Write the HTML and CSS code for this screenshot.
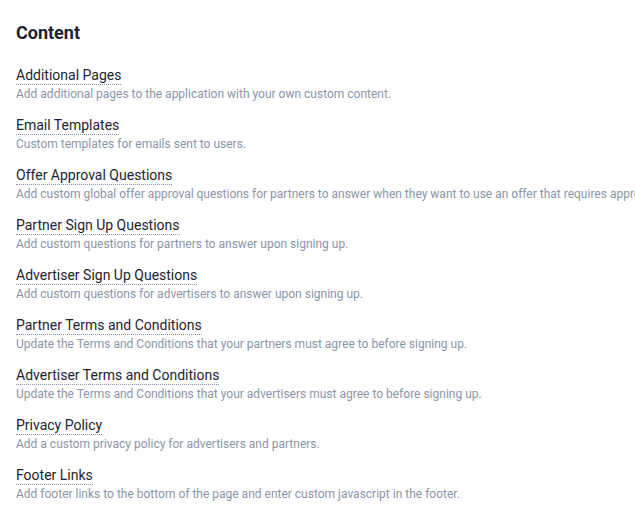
FILE: index.html
```html
<!DOCTYPE html>
<html>
<head>
    <title>Content</title>
    <link rel="stylesheet" href="styles.css">
</head>
<body>
    <div class="page">
        <h2 class="section-title">Content</h2>
        <ul class="settings">
            <li class="setting">
                <a class="setting-name" href="#">Additional Pages</a>
                <p class="setting-desc">Add additional pages to the application with your own custom content.</p>
            </li>
            <li class="setting">
                <a class="setting-name" href="#">Email Templates</a>
                <p class="setting-desc">Custom templates for emails sent to users.</p>
            </li>
            <li class="setting">
                <a class="setting-name" href="#">Offer Approval Questions</a>
                <p class="setting-desc">Add custom global offer approval questions for partners to answer when they want to use an offer that requires approval.</p>
            </li>
            <li class="setting">
                <a class="setting-name" href="#">Partner Sign Up Questions</a>
                <p class="setting-desc">Add custom questions for partners to answer upon signing up.</p>
            </li>
            <li class="setting">
                <a class="setting-name" href="#">Advertiser Sign Up Questions</a>
                <p class="setting-desc">Add custom questions for advertisers to answer upon signing up.</p>
            </li>
            <li class="setting">
                <a class="setting-name" href="#">Partner Terms and Conditions</a>
                <p class="setting-desc">Update the Terms and Conditions that your partners must agree to before signing up.</p>
            </li>
            <li class="setting">
                <a class="setting-name" href="#">Advertiser Terms and Conditions</a>
                <p class="setting-desc">Update the Terms and Conditions that your advertisers must agree to before signing up.</p>
            </li>
            <li class="setting">
                <a class="setting-name" href="#">Privacy Policy</a>
                <p class="setting-desc">Add a custom privacy policy for advertisers and partners.</p>
            </li>
            <li class="setting">
                <a class="setting-name" href="#">Footer Links</a>
                <p class="setting-desc">Add footer links to the bottom of the page and enter custom javascript in the footer.</p>
            </li>
        </ul>
    </div>
</body>
</html>
```

FILE: styles.css
```css
body {
    margin: 0;
    background-color: #fff;
    font-family: Roboto, "Liberation Sans", sans-serif;
    overflow: hidden;
}

.page {
    padding: 22px 16px 0 16px;
    white-space: nowrap;
}

.section-title {
    margin: 0 0 21px 0;
    font-size: 18px;
    line-height: 22px;
    font-weight: bold;
    color: #1d2330;
}

.settings {
    list-style: none;
    margin: 0;
    padding: 0;
}

.setting {
    height: 50px;
}

.setting-name {
    display: inline-block;
    font-size: 14px;
    line-height: 17px;
    color: #1d2330;
    text-decoration: none;
    border-bottom: 1px dotted #8a94a6;
}

.setting-desc {
    margin: 2px 0 0 0;
    font-size: 12px;
    line-height: 15px;
    color: #8b95a7;
}
```
